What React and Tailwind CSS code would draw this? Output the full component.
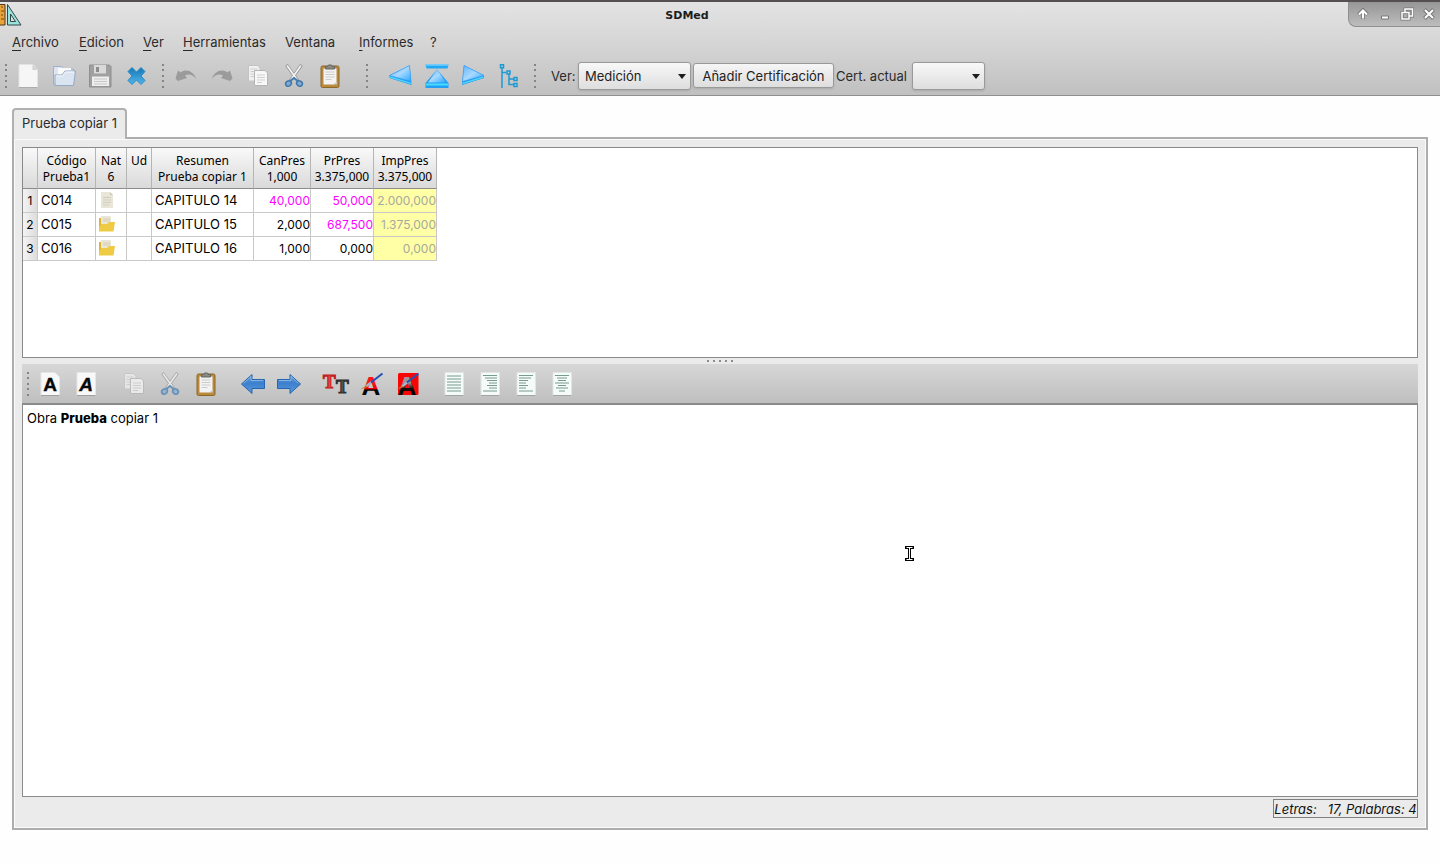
import React, { useState } from "react";

const menus = [
  { label: "Archivo", width: "w-[67px]" },
  { label: "Edicion", width: "w-16" },
  { label: "Ver", width: "w-10" },
  { label: "Herramientas", width: "w-[102px]" },
  { label: "Ventana", width: "w-[74px]", plain: true },
  { label: "Informes", width: "w-[71px]" },
  { label: "?", width: "w-6", plain: true },
];

const columns = [
  { title: "Código", sub: "Prueba1", width: "w-[58px]" },
  { title: "Nat", sub: "6", width: "w-[31px]" },
  { title: "Ud", sub: "", width: "w-[25px]" },
  { title: "Resumen", sub: "Prueba copiar 1", width: "w-[102px]" },
  { title: "CanPres", sub: "1,000", width: "w-[57px]" },
  { title: "PrPres", sub: "3.375,000", width: "w-[63px]" },
  { title: "ImpPres", sub: "3.375,000", width: "w-[63px]" },
];

const rows = [
  { code: "C014", nat: "page", name: "CAPITULO 14", can: "40,000", pr: "50,000", imp: "2.000,000", canEdited: true, prEdited: true },
  { code: "C015", nat: "folder", name: "CAPITULO 15", can: "2,000", pr: "687,500", imp: "1.375,000", prEdited: true },
  { code: "C016", nat: "folder", name: "CAPITULO 16", can: "1,000", pr: "0,000", imp: "0,000" },
];

const Icon = ({ children, className = "h-6 w-6 overflow-visible" }) => (
  <svg viewBox="0 0 24 24" className={className} fill="none" aria-hidden="true">
    {children}
  </svg>
);

const NewIcon = () => (
  <Icon>
    <path d="M3 .5h14l4.500 5V23.500H3z" fill="#f6f6f6" stroke="#e3e3e3" />
    <path d="M3 23.500h18.500" stroke="#adadad" />
    <path d="M16.500 .5l5 5.500h-5z" fill="#d2d2d2" />
  </Icon>
);

const OpenIcon = () => (
  <Icon>
    <path d="M1.500 20V2.500h8l2 2.500h10v15z" fill="#dce5f1" stroke="#9db0cb" />
    <path d="M6 4h13v8H6z" fill="#fafafa" />
    <path d="M3 21.500V11h7l3-4h10.500l-2 14.500z" fill="#dbe5f2" stroke="#94a9c6" />
    <path d="M4 12h6.500l3-4H22" stroke="#f7faff" />
  </Icon>
);

const SaveIcon = () => (
  <Icon>
    <path d="M1.500 1h20l1.500 1.500V23H1.500z" fill="#a0a0a0" stroke="#8f8f8f" />
    <path d="M6 1h12v8.500H6z" fill="#d9d9d9" />
    <path d="M8 3h3v5H8z" fill="#8d8d8d" />
    <path d="M4 12.500h17V22H4z" fill="#eee" />
    <path d="M6 15h13M6 17.500h13M6 20h13" stroke="#c8c8c8" />
  </Icon>
);

const CloseFileIcon = () => (
  <Icon>
    <defs>
      <linearGradient id="closeFill" x1="0" y1="0" x2="0" y2="1">
        <stop offset="0" stopColor="#1577b5" />
        <stop offset="1" stopColor="#51b5ec" />
      </linearGradient>
    </defs>
    <path
      d="M8 3.500 12.500 8 17 3.500l4 4L17 12l4 4.500-4 4-4.500-4.500L8 20.500l-4-4L8 12 4 7.500z"
      fill="url(#closeFill)"
      stroke="#298bc5"
      strokeLinejoin="round"
    />
  </Icon>
);

const UndoIcon = () => (
  <Icon>
    <path d="M1.500 14.500 4 6.500l2.500 2C12.500 4.500 19 7 22.500 15c-4-4.500-8-5.500-11.500-3.500l2 2.500-9 3z" fill="#9b9b9b" />
  </Icon>
);

const RedoIcon = () => (
  <Icon>
    <path d="M22.500 14.500 20 6.500l-2.500 2C11.500 4.500 5 7 1.500 15c4-4.500 8-5.500 11.500-3.500l-2 2.500 9 3z" fill="#9b9b9b" />
  </Icon>
);

const CopyIcon = () => (
  <Icon>
    <path d="M2.500 1.500h9L14 4v13H2.500z" fill="#f0f0f0" stroke="#c4c4c4" />
    <path d="M4.500 5h7M4.500 7.500h7M4.500 10h5M4.500 12.500h4" stroke="#cecece" />
    <path d="M8.500 6.500H19l2.500 2.500v12.500h-13z" fill="#f8f8f8" stroke="#b4b4b4" />
    <path d="M11 11h8M11 13.500h8M11 16h8M11 18.500h5" stroke="#cfcfcf" />
  </Icon>
);

const CutIcon = () => (
  <Icon>
    <path d="M4.500 1 16 17M19.500 1 8 17" stroke="#8e8e8e" strokeWidth="3" />
    <path d="M5 1.500 16 17M19 1.500 8 17" stroke="#f2f2f2" strokeWidth="1.800" />
    <path d="m8 17 4-3 4 3" stroke="#437caf" strokeWidth="2" />
    <ellipse cx="6.500" cy="19.500" rx="3" ry="2.500" transform="rotate(-35 6.500 19.500)" fill="#82acd3" stroke="#3f77ac" strokeWidth="1.500" />
    <ellipse cx="17.500" cy="19.500" rx="3" ry="2.500" transform="rotate(35 17.500 19.500)" fill="#82acd3" stroke="#3f77ac" strokeWidth="1.500" />
  </Icon>
);

const PasteIcon = () => (
  <Icon>
    <rect x="3" y="2" width="18" height="21.500" rx="1.500" fill="#b98a3d" stroke="#8d6726" />
    <path d="M5.500 4.500h13v14l-2.500 2H5.500z" fill="#f3f3f3" />
    <path d="M7.500 8h9M7.500 10.500h9M7.500 13h9M7.500 15.500h6" stroke="#ccc" />
    <path d="m15.500 20.500 3.500-3v3z" fill="#c9c9c9" />
    <path d="M7.500 5V2.500h2L10.500 1h3l1 1.500h2V5z" fill="#8b8b86" stroke="#656560" />
  </Icon>
);

const BlueDefs = ({ id }) => (
  <defs>
    <linearGradient id={id} x1="0" y1="0" x2="1" y2="1">
      <stop offset="0" stopColor="#5db7ff" />
      <stop offset="0.500" stopColor="#a9d8ff" />
      <stop offset="1" stopColor="#28a9ff" />
    </linearGradient>
  </defs>
);

const PrevIcon = () => (
  <Icon>
    <BlueDefs id="prevFill" />
    <path d="M.5 11.500 20.500 1.500 22.500 21 .5 14z" fill="#168ff0" />
    <path d="M.5 11.500 20.500 1.500l1.500 16z" fill="url(#prevFill)" stroke="#3a9df2" strokeWidth=".7" />
    <path d="m1 13 21 6.500" stroke="#4ed6ff" strokeWidth="1.500" />
  </Icon>
);

const TopIcon = () => (
  <Icon>
    <BlueDefs id="topFill" />
    <path d="M.5 .5h23l-1 4H1.500z" fill="#21a9f8" />
    <path d="M1 1h22" stroke="#72d0ff" strokeWidth="1.500" />
    <path d="M12 5.500 23.500 19v5H.5v-5z" fill="#219ff3" />
    <path d="M12 5.500 21 18.500H3z" fill="url(#topFill)" />
    <path d="M1 20.500h22" stroke="#48dcff" strokeWidth="2" />
  </Icon>
);

const NextIcon = () => (
  <Icon>
    <BlueDefs id="nextFill" />
    <path d="M23 11.500 3 1.500 1 21l22-7z" fill="#168ff0" />
    <path d="M23 11.500 3 1.500l-1.500 16z" fill="url(#nextFill)" stroke="#3a9df2" strokeWidth=".7" />
    <path d="m22.500 13-21 6.500" stroke="#4ed6ff" strokeWidth="1.500" />
  </Icon>
);

const TreeIcon = () => (
  <Icon>
    <path d="M5 4v20M5 8.500h4M12 10v10.500h5M12 15h5" stroke="#1c9bd3" strokeWidth="1.500" />
    <path d="M3.500 .8h3v3h-3zM10 7h3v3h-3zM17 13.500h3v3h-3zM17 19.500h3v3h-3z" stroke="#1c9bd3" strokeWidth="1.500" />
  </Icon>
);

const LetterIcon = ({ italic }) => (
  <Icon>
    <path d={italic ? "M3 .5h18.500v23H3z" : "M3 .5h14l4.500 4.500v18.500H3z"} fill="#f8f8f8" stroke="#e6e6e6" />
    <path d="M3 23.500h18.500" stroke="#9f9f9f" />
    <text
      x="12"
      y="19"
      textAnchor="middle"
      fontFamily="Liberation Sans, sans-serif"
      fontSize="19"
      fontWeight="bold"
      fontStyle={italic ? "italic" : "normal"}
      fill="#080808"
      stroke="#080808"
      strokeWidth=".4"
    >
      A
    </text>
  </Icon>
);

const ArrowIcon = ({ right }) => (
  <Icon className={right ? "h-6 w-6 -scale-x-100" : "h-6 w-6"}>
    <defs>
      <linearGradient id={right ? "arrowR" : "arrowL"} x1="0" y1="0" x2="0" y2="1">
        <stop offset="0" stopColor="#6fa5dc" />
        <stop offset="0.450" stopColor="#3c7fcc" />
        <stop offset="1" stopColor="#5b9ae0" />
      </linearGradient>
    </defs>
    <path
      d="M.5 12 11 2.500V7.500h12.500v9H11V21.500z"
      fill={right ? "url(#arrowR)" : "url(#arrowL)"}
      stroke="#2765ad"
      strokeLinejoin="round"
    />
    <path d="M2.500 11.500 10 4.500v4h12" stroke="#94bde9" strokeWidth=".8" />
  </Icon>
);

const FontIcon = () => (
  <Icon>
    <g fontFamily="Liberation Serif, serif" fontSize="19" fontWeight="bold" strokeWidth="1.200">
      <text x="-1" y="16" fill="#f04545" stroke="#c22222">T</text>
      <text x="12" y="21" fill="#555" stroke="#303030">T</text>
    </g>
  </Icon>
);

const ColorIcon = ({ filled }) => (
  <Icon>
    <defs>
      <linearGradient id={filled ? "inkFilled" : "inkPlain"} x1="0" y1="0" x2="0" y2="1">
        <stop offset="0.400" stopColor={filled ? "#999" : "#ff1515"} />
        <stop offset="0.600" stopColor={filled ? "#111" : "#e00"} />
        <stop offset="0.650" stopColor="#050505" />
      </linearGradient>
    </defs>
    {filled && <rect x="2" y="1" width="20.500" height="22" rx="1.500" fill="#f80505" />}
    <text
      x="11"
      y="22.500"
      textAnchor="middle"
      fontFamily="Liberation Sans, sans-serif"
      fontSize="26"
      fontWeight="bold"
      fill={filled ? "url(#inkFilled)" : "url(#inkPlain)"}
    >
      A
    </text>
    <path d="M9 12 22.500 1.500" stroke="#2450b4" strokeWidth="2" />
    <path d="m6 14.500 5-4" stroke="#a8b5c7" strokeWidth="2.500" />
    <path d="m0 17.500 6.500-4 1 1.500z" fill="#ce762f" />
  </Icon>
);

const alignLines = {
  justify: "M5 4h14M5 7h14M5 10h14M5 13h14M5 16h14M5 19h14",
  right: "M5 3.500h14M7 6h12M9 8.500h10M11 11h8M9 13.500h10M11 16h8M5 19h14",
  left: "M5 3.500h14M5 6h12M5 8.500h9M5 11h7M5 13.500h9M5 16h7M5 19h14",
  center: "M5 3.500h14M7 6h10M8 8.500h8M5 11h14M8 13.500h8M6 16h12M9 19h6",
};

const AlignIcon = ({ kind }) => (
  <Icon>
    <path d="M3 .5h18.500v23H3z" fill="#f4fbf8" stroke="#e1e5e3" />
    <path d="M3 23.500h18.500" stroke="#a3a3a3" />
    <path d={alignLines[kind]} stroke="#789a91" />
  </Icon>
);

const AppIcon = () => (
  <svg viewBox="0 0 22 24" className="h-6 w-[22px] shrink-0" aria-hidden="true">
    <path d="M-1 2.500h6V23h-6z" fill="#eaa338" stroke="#51391b" />
    <path d="M1 5h2M1 9h3M1 13h2M1 17h3" stroke="#6d4a1a" />
    <path d="M7.500 2.500V23H21z" fill="#9ae2dc" stroke="#31484b" />
    <path d="M10.500 12v7.500h5z" fill="#ddd" stroke="#31484b" />
  </svg>
);

const NatIcon = ({ kind }) => (
  <svg viewBox="0 0 18 18" className="block h-[18px] w-[18px]" aria-label={kind}>
    {kind === "page" ? (
      <>
        <path d="M3 1h9l3 3v13H3z" fill="#e9e6d7" />
        <path d="M12 1v3h3z" fill="#cbc8b9" />
        <path d="M5 6.500h8M5 9h8M5 11.500h8M5 14h6" stroke="#d0cdbf" />
      </>
    ) : (
      <>
        <path d="M1 3h4v13H1z" fill="#e0b52e" />
        <path d="M3 1h10v10H3z" fill="#ebe7d7" />
        <path d="M5 4h7M5 6h7" stroke="#d2ceb9" />
        <path d="M1 16.500V12l2-3h6l2-2h6l-1.500 9.500z" fill="#efca45" />
      </>
    )}
  </svg>
);

const Handle = ({ className }) => (
  <div className={`flex h-6 w-[3px] shrink-0 flex-col justify-between ${className}`}>
    {[0, 1, 2, 3, 4].map((n) => (
      <span key={n} className="h-0.5 w-0.5 bg-[#858585]" />
    ))}
  </div>
);

const ToolButton = ({ label, faded, children }) => (
  <button
    type="button"
    aria-label={label}
    title={label}
    className={`flex h-9 w-9 shrink-0 items-center justify-center rounded hover:bg-white/30 ${faded ? "opacity-70" : ""}`}
  >
    {children}
  </button>
);

const Combo = ({ id, value, onChange, options, className }) => (
  <div className={`relative h-7 shrink-0 ${className}`}>
    <select
      id={id}
      value={value}
      onChange={onChange}
      className="h-full w-full appearance-none rounded-[3px] border border-[#999] bg-linear-to-b from-[#f8f8f8] to-[#dedede] pl-1.5 text-[13px] text-[#222] shadow-sm outline-none"
    >
      {options.map((o) => (
        <option key={o} value={o}>
          {o}
        </option>
      ))}
    </select>
    <svg viewBox="0 0 8 5" className="pointer-events-none absolute top-3 right-[5px] h-[5px] w-2">
      <path d="M0 0h8L4 5z" fill="#1d1d1d" />
    </svg>
  </div>
);

const TitleBar = () => (
  <header className="flex h-7 items-start border-t-2 border-[#554f53]">
    <AppIcon />
    <h1 className="flex-1 pt-1.5 pl-1 text-center font-['DejaVu_Sans',sans-serif] text-[11px] leading-4 font-bold text-[#1c1c1c]">
      SDMed
    </h1>
    <div className="flex h-[25px] w-[92px] shrink-0 items-center justify-between rounded-bl-lg border-b border-l border-[#8f8f8f] bg-linear-to-b from-[#969696] to-[#bdbdbd] pr-1 pl-[7px]">
      <button type="button" aria-label="Shade">
        <svg viewBox="0 0 14 14" className="h-3.5 w-3.5" fill="none">
          <path d="M7 12V5M2.500 7.500 7 3l4.500 4.500" stroke="#777" strokeWidth="3.500" />
          <path d="M7 11.500V4M3 7.500l4-4 4 4" stroke="#fff" strokeWidth="2" />
        </svg>
      </button>
      <button type="button" aria-label="Minimize">
        <svg viewBox="0 0 14 14" className="h-3.5 w-3.5">
          <path d="M3.500 9h7v3h-7z" fill="#fff" stroke="#777" />
        </svg>
      </button>
      <button type="button" aria-label="Restore">
        <svg viewBox="0 0 14 14" className="h-3.5 w-3.5" fill="none">
          <path d="M5 5V2h7.500v7H9M2 5.500h7V12H2z" stroke="#777" strokeWidth="3" />
          <path d="M5 5V2h7.500v7H9M2 5.500h7V12H2z" stroke="#fff" strokeWidth="1.500" />
        </svg>
      </button>
      <button type="button" aria-label="Close">
        <svg viewBox="0 0 14 14" className="h-3.5 w-3.5" fill="none">
          <path d="m2.500 2.500 9 9m0-9-9 9" stroke="#777" strokeWidth="4" />
          <path d="m3 3 8 8m0-8-8 8" stroke="#fff" strokeWidth="2" />
        </svg>
      </button>
    </div>
  </header>
);

const MenuBar = () => (
  <nav className="flex h-7 items-center pl-3">
    {menus.map((m) => (
      <button key={m.label} type="button" className={`shrink-0 text-left ${m.width}`}>
        {m.plain ? (
          m.label
        ) : (
          <>
            <span className="underline underline-offset-[3px]">{m.label[0]}</span>
            {m.label.slice(1)}
          </>
        )}
      </button>
    ))}
  </nav>
);

const MainToolbar = () => {
  const [view, setView] = useState("Medición");
  const [cert, setCert] = useState("");

  return (
    <div className="flex h-[39px] items-center">
      <Handle className="mr-0.5 ml-[5px]" />
      <ToolButton label="Nuevo"><NewIcon /></ToolButton>
      <ToolButton label="Abrir"><OpenIcon /></ToolButton>
      <ToolButton label="Guardar"><SaveIcon /></ToolButton>
      <ToolButton label="Cerrar"><CloseFileIcon /></ToolButton>
      <Handle className="mr-[3px] ml-2" />
      <ToolButton label="Deshacer"><UndoIcon /></ToolButton>
      <ToolButton label="Rehacer"><RedoIcon /></ToolButton>
      <ToolButton label="Copiar"><CopyIcon /></ToolButton>
      <ToolButton label="Cortar"><CutIcon /></ToolButton>
      <ToolButton label="Pegar"><PasteIcon /></ToolButton>
      <Handle className="mr-[14px] ml-[18px]" />
      <ToolButton label="Anterior"><PrevIcon /></ToolButton>
      <ToolButton label="Subir"><TopIcon /></ToolButton>
      <ToolButton label="Siguiente"><NextIcon /></ToolButton>
      <ToolButton label="Árbol"><TreeIcon /></ToolButton>
      <Handle className="mr-[14px] ml-[7px]" />
      <label htmlFor="view" className="w-[27px] shrink-0">Ver:</label>
      <Combo
        id="view"
        value={view}
        onChange={(e) => setView(e.target.value)}
        options={["Medición", "Certificación"]}
        className="w-[113px]"
      />
      <button
        type="button"
        className="mx-0.5 h-[25px] w-[141px] shrink-0 rounded-[3px] border border-[#999] bg-linear-to-b from-[#f6f6f6] to-[#dedede] text-[#222] shadow-sm"
      >
        Añadir Certificación
      </button>
      <label htmlFor="cert" className="w-[76px] shrink-0 whitespace-nowrap">Cert. actual</label>
      <Combo
        id="cert"
        value={cert}
        onChange={(e) => setCert(e.target.value)}
        options={[""]}
        className="w-[73px]"
      />
    </div>
  );
};

const BudgetTable = () => (
  <div className="h-[211px] overflow-auto border border-[#898989] bg-white">
    <table className="w-[414px] table-fixed border-separate border-spacing-0">
      <thead>
        <tr className="h-[41px] bg-linear-to-b from-[#f9f9f9] to-[#d9d9d9] font-['Noto_Sans',sans-serif] text-xs leading-4 text-black">
          <th className="w-[15px] border-r border-b border-r-[#b5b5b5] border-b-[#8c8c8c]" />
          {columns.map((c) => (
            <th
              key={c.title}
              scope="col"
              className={`border-r border-b border-r-[#b5b5b5] border-b-[#8c8c8c] p-0 pt-[5px] align-top font-normal whitespace-nowrap ${c.width}`}
            >
              {c.title}
              <br />
              {c.sub}
            </th>
          ))}
        </tr>
      </thead>
      <tbody className="text-black">
        {rows.map((r, i) => (
          <tr key={r.code} className="h-6 *:border-r *:border-b *:border-[#c9c9c9] *:p-0 *:align-top *:leading-[23px]">
            <th scope="row" className="bg-linear-to-r from-[#f4f4f4] to-[#dcdcdc] text-xs font-normal">
              {i + 1}
            </th>
            <td><span className="pl-[3px]">{r.code}</span></td>
            <td><div className="pt-0.5 pl-0.5"><NatIcon kind={r.nat} /></div></td>
            <td />
            <td className="whitespace-nowrap"><span className="pl-[3px]">{r.name}</span></td>
            <td className={`text-right text-xs ${r.canEdited ? "text-[#ff00ff]" : ""}`}>{r.can}</td>
            <td className={`text-right text-xs ${r.prEdited ? "text-[#ff00ff]" : ""}`}>{r.pr}</td>
            <td className="bg-[#ffffa5] text-right text-xs text-[#a8a89e]">{r.imp}</td>
          </tr>
        ))}
      </tbody>
    </table>
  </div>
);

const EditorToolbar = () => (
  <div className="flex h-[41px] items-center border-b-2 border-[#8a8a8a] bg-linear-to-b from-[#d7d7d7] to-[#bfbfbf]">
    <Handle className="mr-0.5 ml-[5px]" />
    <ToolButton label="Negrita"><LetterIcon /></ToolButton>
    <ToolButton label="Cursiva"><LetterIcon italic /></ToolButton>
    <div className="w-3" />
    <ToolButton label="Copiar texto" faded><CopyIcon /></ToolButton>
    <ToolButton label="Cortar texto" faded><CutIcon /></ToolButton>
    <ToolButton label="Pegar texto"><PasteIcon /></ToolButton>
    <div className="w-[11px]" />
    <ToolButton label="Deshacer texto"><ArrowIcon /></ToolButton>
    <ToolButton label="Rehacer texto"><ArrowIcon right /></ToolButton>
    <div className="w-[11px]" />
    <ToolButton label="Fuente"><FontIcon /></ToolButton>
    <ToolButton label="Color de texto"><ColorIcon /></ToolButton>
    <ToolButton label="Color de fondo"><ColorIcon filled /></ToolButton>
    <div className="w-2.5" />
    <ToolButton label="Justificar"><AlignIcon kind="justify" /></ToolButton>
    <ToolButton label="Alinear a la derecha"><AlignIcon kind="right" /></ToolButton>
    <ToolButton label="Alinear a la izquierda"><AlignIcon kind="left" /></ToolButton>
    <ToolButton label="Centrar"><AlignIcon kind="center" /></ToolButton>
  </div>
);

const App = () => {
  return (
    <div className="flex min-h-screen flex-col bg-[#fefefe] font-['Inter',sans-serif] text-[13px] leading-5 text-[#2b2b2b]">
      <div className="border-b border-[#8f8f8f] bg-linear-to-b from-[#e4e4e4] via-[#d4d4d4] to-[#c0c0c0]">
        <TitleBar />
        <MenuBar />
        <MainToolbar />
      </div>

      <main className="flex flex-1 flex-col px-3 pt-3 pb-[34px]">
        <div role="tablist" className="relative z-10 -mb-0.5 flex">
          <button
            type="button"
            role="tab"
            aria-selected="true"
            className="h-[31px] w-[115px] rounded-t border-2 border-b-0 border-[#b0b0b0] bg-[#ebebeb] pb-1 whitespace-nowrap"
          >
            Prueba copiar 1
          </button>
        </div>

        <section className="flex flex-1 flex-col border-2 border-[#adadad] bg-[#ebebeb] px-2 pt-2 pb-2.5 shadow-[inset_0_0_0_1px_#fafafa]">
          <BudgetTable />
          <div className="flex h-1.5 items-center justify-center gap-1">
            {[0, 1, 2, 3, 4].map((n) => (
              <span key={n} className="h-0.5 w-0.5 bg-[#8c8c8c]" />
            ))}
          </div>
          <EditorToolbar />
          <div className="relative flex flex-1 flex-col">
            <div
              role="textbox"
              aria-label="Texto"
              contentEditable
              suppressContentEditableWarning
              className="flex-1 border border-t-0 border-[#8c8c8c] bg-white px-1 pt-[3px] text-black outline-none"
            >
              Obra <b className="font-extrabold">Prueba</b> copiar 1
            </div>
            {/* text cursor */}
            <svg viewBox="0 0 9 17" className="pointer-events-none absolute top-[140px] left-[883px] h-[17px] w-[9px]" fill="none">
              <path d="M1.500 2.500h6M4.500 2.500v12M1.500 14.500h6" stroke="#000" strokeWidth="3" strokeLinecap="square" />
              <path d="M1.500 2.500h6M4.500 2.500v12M1.500 14.500h6" stroke="#fff" strokeWidth="1" />
            </svg>
          </div>
          <div className="mt-0.5 flex justify-end">
            <output className="h-[19px] w-[145px] border border-[#808080] text-center leading-[18px] whitespace-pre text-[#111] italic">
              Letras:   17, Palabras: 4
            </output>
          </div>
        </section>
      </main>
    </div>
  );
};

export default App;
